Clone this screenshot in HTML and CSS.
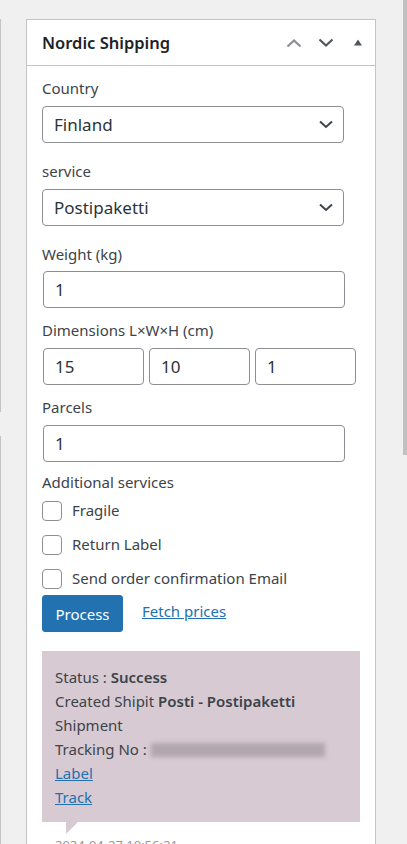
FILE: index.html
```html
<!DOCTYPE html>
<html lang="en">
<head>
<meta charset="utf-8">
<title>Nordic Shipping</title>
<link rel="stylesheet" href="styles.css">
</head>
<body>
<div class="page">
  <div class="prev-col">
    <div class="prev-seg seg-a"></div>
    <div class="prev-seg seg-b"></div>
  </div>
  <div class="postbox">
    <div class="hndle">
      <h2 class="title">Nordic Shipping</h2>
      <div class="handle-actions">
        <svg class="ico up" width="16" height="10" viewBox="0 0 16 10"><path d="M1.5 8.5 L8 2.5 L14.5 8.5" fill="none" stroke="currentColor" stroke-width="2.2"/></svg>
        <svg class="ico down" width="16" height="10" viewBox="0 0 16 10"><path d="M1.5 1.5 L8 7.5 L14.5 1.5" fill="none" stroke="currentColor" stroke-width="2.2"/></svg>
        <svg class="ico toggle" width="8" height="7" viewBox="0 0 8 7"><polygon points="0,6.5 4,0.5 8,6.5" fill="currentColor"/></svg>
      </div>
    </div>
    <div class="inside">
      <div class="lbl">Country</div>
      <div class="select">
        <span>Finland</span>
        <svg width="14" height="9" viewBox="0 0 14 9"><path d="M1 1.5 L7 7 L13 1.5" fill="none" stroke="currentColor" stroke-width="2"/></svg>
      </div>
      <div class="lbl after-select">service</div>
      <div class="select">
        <span>Postipaketti</span>
        <svg width="14" height="9" viewBox="0 0 14 9"><path d="M1 1.5 L7 7 L13 1.5" fill="none" stroke="currentColor" stroke-width="2"/></svg>
      </div>
      <div class="lbl after-select weight-lbl">Weight (kg)</div>
      <input class="field" type="text" value="1">
      <div class="lbl after-input">Dimensions L×W×H (cm)</div>
      <div class="dims">
        <input class="field dim" type="text" value="15">
        <input class="field dim" type="text" value="10">
        <input class="field dim" type="text" value="1">
      </div>
      <div class="lbl after-input">Parcels</div>
      <input class="field parcels" type="text" value="1">
      <div class="lbl after-input add-lbl">Additional services</div>
      <div class="checks">
        <label class="check"><span class="box"></span><span class="check-text">Fragile</span></label>
        <label class="check"><span class="box"></span><span class="check-text">Return Label</span></label>
        <label class="check"><span class="box"></span><span class="check-text">Send order confirmation Email</span></label>
      </div>
      <div class="actions">
        <button class="btn" type="button">Process</button>
        <a class="link" href="#">Fetch prices</a>
      </div>
      <div class="note">
        <div class="note-content">
          <p>Status : <b>Success</b></p>
          <p>Created Shipit <b>Posti - Postipaketti</b></p>
          <p>Shipment</p>
          <p>Tracking No : <span class="blur"></span></p>
          <p><a class="link" href="#">Label</a></p>
          <p><a class="link" href="#">Track</a></p>
        </div>
        <div class="meta">2024-04-27 10:56:21</div>
      </div>
    </div>
  </div>
  <div class="spacer"></div>
  <div class="scroll-thumb"></div>
</div>
</body>
</html>
```
FILE: styles.css
```css
html, body {
  margin: 0;
  padding: 0;
  height: 844px;
  overflow: hidden;
  background: #f0f0f1;
}
body {
  font-family: "Noto Sans", "Open Sans", sans-serif;
  color: #3c434a;
}
.page {
  display: flex;
  align-items: flex-start;
  height: 844px;
}
.prev-col {
  width: 1px;
  display: flex;
  flex-direction: column;
  gap: 24px;
  padding-top: 19px;
  flex-shrink: 0;
}
.prev-seg {
  border-left: 1px solid #c3c4c7;
  width: 0;
}
.seg-a { height: 393px; }
.seg-b { height: 500px; }
.postbox {
  margin-left: 25px;
  margin-top: 19px;
  width: 348px;
  min-height: 900px;
  border: 1px solid #c3c4c7;
  background: #fff;
  flex-shrink: 0;
}
.hndle {
  height: 45px;
  border-bottom: 1px solid #c3c4c7;
  display: flex;
  align-items: center;
  justify-content: space-between;
  padding: 0 13px 0 15px;
}
.title {
  margin: 0;
  font-size: 16.5px;
  font-weight: 600;
  color: #1d2327;
  line-height: 20px;
}
.handle-actions {
  display: flex;
  align-items: center;
}
.ico { display: block; }
.up { color: #8c8f94; margin-right: 16px; }
.down { color: #50575e; margin-right: 20px; }
.toggle { color: #50575e; }
.inside {
  padding: 13px 15px 0 15px;
}
.lbl {
  font-size: 15px;
  line-height: 18px;
  height: 18px;
  padding-bottom: 2px;
}
.after-select { margin-top: 19px; }
.after-input { margin-top: 13px; }
.add-lbl { margin-top: 11px; }
.select {
  margin-top: 7px;
  height: 35px;
  border: 1px solid #8c8f94;
  border-radius: 4px;
  display: flex;
  align-items: center;
  justify-content: space-between;
  padding: 0 10px 0 11px;
  box-sizing: content-box;
  width: 279px;
  font-size: 17px;
  color: #2c3338;
}
.select svg { color: #3c434a; display: block; }
.field {
  display: block;
  box-sizing: border-box;
  margin: 6px 0 0 1px;
  width: 302px;
  height: 37px;
  border: 1px solid #8c8f94;
  border-radius: 4px;
  padding: 0 11px;
  font-family: inherit;
  font-size: 17px;
  color: #2c3338;
  background: #fff;
  outline: none;
}
.parcels { margin-top: 7px; height: 37px; }
.dims {
  display: flex;
  gap: 5px;
  margin: 7px 0 0 1px;
}
.dim {
  margin: 0;
  width: 101px;
}
.checks {
  margin-top: 8px;
  display: flex;
  flex-direction: column;
  gap: 14px;
}
.check {
  display: flex;
  align-items: center;
  gap: 10px;
  font-size: 15px;
  line-height: 20px;
  height: 20px;
}
.check-text { padding-bottom: 3px; }
.box {
  width: 18px;
  height: 18px;
  border: 1px solid #8c8f94;
  border-radius: 4px;
  background: #fff;
  flex-shrink: 0;
}
.actions {
  margin-top: 6px;
  display: flex;
  align-items: center;
  gap: 19px;
}
.btn {
  width: 81px;
  height: 37px;
  background: #2271b1;
  border: 1px solid #2271b1;
  border-radius: 3px;
  color: #fff;
  font-family: inherit;
  font-size: 15px;
  padding: 0;
}
.link {
  color: #2271b1;
  text-decoration: underline;
  font-size: 15px;
}
.actions .link { margin-bottom: 5px; }
.note {
  margin-top: 19px;
}
.note-content {
  position: relative;
  background: #d7cad2;
  padding: 14px 13px 13px 13px;
  width: 292px;
}
.note-content::after {
  content: "";
  position: absolute;
  left: 24px;
  bottom: -12px;
  border-style: solid;
  border-width: 12px 12px 0 0;
  border-color: #d7cad2 transparent;
}
.note-content p {
  margin: 0;
  font-size: 15px;
  line-height: 24px;
  height: 24px;
  white-space: nowrap;
}
.note-content b { font-weight: 600; }
.blur {
  display: inline-block;
  width: 174px;
  height: 14px;
  background: #b2a6ae;
  filter: blur(2px);
  vertical-align: -2px;
}
.meta {
  padding: 14px 13px;
  font-size: 13px;
  color: #999;
}
.spacer { flex: 1; }
.scroll-thumb {
  width: 4px;
  height: 455px;
  background: #c1c1c1;
  flex-shrink: 0;
}
```
